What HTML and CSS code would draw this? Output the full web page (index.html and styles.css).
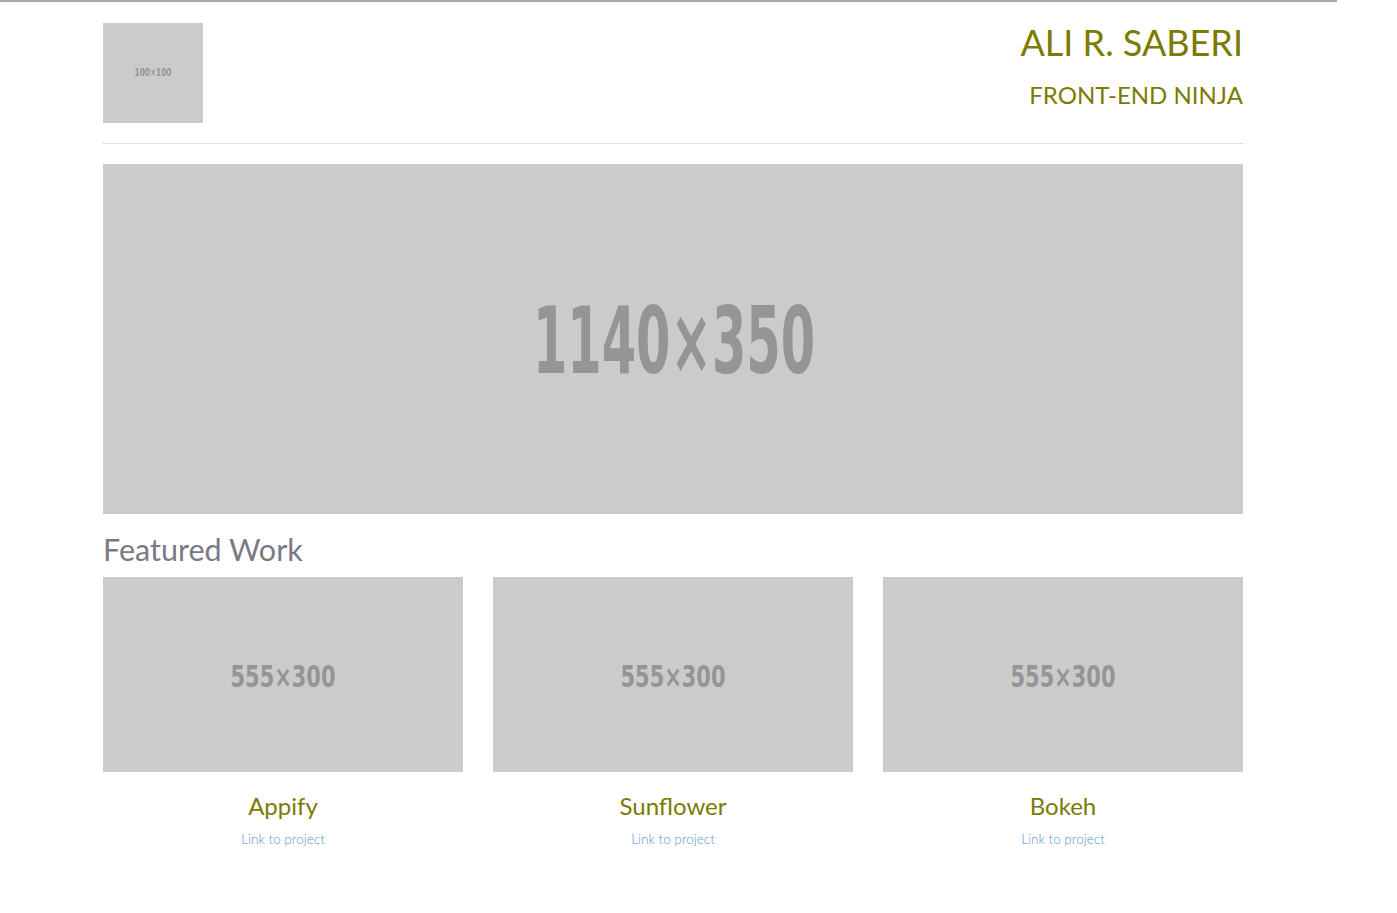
FILE: index.html
```html
<!DOCTYPE html>
<html lang="en">
<head>
<meta charset="utf-8">
<title>Ali R. Saberi</title>
<link rel="stylesheet" href="styles.css">
</head>
<body>
<div class="topline"></div>
<div class="container">
  <header class="header">
    <div class="logo ph">
      <svg viewBox="0 0 100 100" width="100" height="100"><text x="50" y="53" text-anchor="middle" textLength="37" lengthAdjust="spacingAndGlyphs" class="ph-text" font-size="10">100×100</text></svg>
    </div>
    <div class="titles">
      <h1 class="name">ALI R. SABERI</h1>
      <h2 class="role">FRONT-END NINJA</h2>
    </div>
  </header>
  <hr class="divider">
  <div class="hero ph">
    <svg viewBox="0 0 1140 350" width="1140" height="350"><text x="571" y="209" text-anchor="middle" textLength="282" lengthAdjust="spacingAndGlyphs" class="ph-text" font-size="93">1140×350</text></svg>
  </div>
  <h3 class="section-title">Featured Work</h3>
  <div class="cards">
    <div class="card">
      <div class="thumb ph">
        <svg viewBox="0 0 360 195" width="360" height="195"><text x="180" y="110" text-anchor="middle" textLength="105" lengthAdjust="spacingAndGlyphs" class="ph-text" font-size="30">555×300</text></svg>
      </div>
      <h4 class="card-title">Appify</h4>
      <a class="card-link" href="#">Link to project</a>
    </div>
    <div class="card">
      <div class="thumb ph">
        <svg viewBox="0 0 360 195" width="360" height="195"><text x="180" y="110" text-anchor="middle" textLength="105" lengthAdjust="spacingAndGlyphs" class="ph-text" font-size="30">555×300</text></svg>
      </div>
      <h4 class="card-title">Sunflower</h4>
      <a class="card-link" href="#">Link to project</a>
    </div>
    <div class="card">
      <div class="thumb ph">
        <svg viewBox="0 0 360 195" width="360" height="195"><text x="180" y="110" text-anchor="middle" textLength="105" lengthAdjust="spacingAndGlyphs" class="ph-text" font-size="30">555×300</text></svg>
      </div>
      <h4 class="card-title">Bokeh</h4>
      <a class="card-link" href="#">Link to project</a>
    </div>
  </div>
</div>
</body>
</html>
```
FILE: styles.css
```css
* { box-sizing: border-box; }
body {
  margin: 0;
  background: #fff;
  font-family: Lato, "Open Sans", sans-serif;
}
.topline {
  width: 1337px;
  height: 2px;
  background: #a3aaa3;
}
.container {
  width: 1140px;
  margin-left: 103px;
}
.header {
  display: flex;
  justify-content: space-between;
  padding-top: 21px;
}
.ph {
  background: #cbcbcb;
}
.ph svg { display: block; }
.ph-text {
  font-family: "DejaVu Sans Condensed", "Liberation Sans Narrow", sans-serif;
  font-weight: bold;
  fill: #959595;
}
.logo {
  width: 100px;
  height: 100px;
}
.titles {
  text-align: right;
}
.name {
  margin: 0;
  font-size: 36px;
  font-weight: 400;
  line-height: 38px;
  color: #7b7b00;
}
.role {
  margin: 19px 0 0;
  font-size: 24px;
  font-weight: 400;
  line-height: 30px;
  color: #7b7b00;
}
.divider {
  border: 0;
  border-top: 1px dotted #c8c8c8;
  margin: 20px 0 20px;
  height: 0;
}
.hero {
  width: 1140px;
  height: 350px;
}
.section-title {
  margin: 16px 0 9px;
  font-size: 30.5px;
  font-weight: 400;
  line-height: 38px;
  color: #7a7a84;
}
.cards {
  display: flex;
  gap: 30px;
}
.card {
  width: 360px;
  display: flex;
  flex-direction: column;
  align-items: center;
}
.thumb {
  width: 360px;
  height: 195px;
}
.card-title {
  margin: 19px 0 0;
  font-size: 24px;
  font-weight: 400;
  line-height: 30px;
  color: #7b7b00;
}
.card-link {
  margin-top: 8px;
  font-size: 13.5px;
  font-weight: 300;
  line-height: 20px;
  color: #5b95d2;
  text-decoration: none;
}
```
